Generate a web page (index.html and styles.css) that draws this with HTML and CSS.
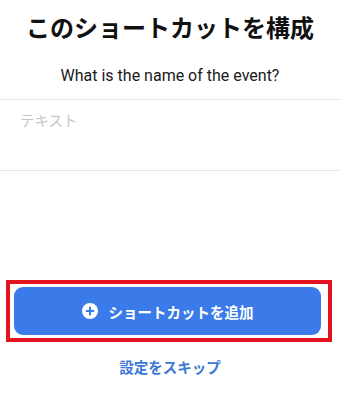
FILE: index.html
```html
<!DOCTYPE html>
<html lang="ja">
<head>
<meta charset="utf-8">
<link rel="stylesheet" href="styles.css">
</head>
<body>
<div class="page">
  <h1 class="title">このショートカットを構成</h1>
  <p class="question">What is the name of the event?</p>
  <div class="field"><span class="placeholder">テキスト</span></div>
  <div class="highlight">
    <button class="add-btn">
      <svg class="plus" viewBox="0 0 16 16" width="16" height="16" aria-hidden="true">
        <circle cx="8" cy="8" r="8" fill="#ffffff"/>
        <path d="M8 4.6v6.8M4.6 8h6.8" stroke="#3a7be9" stroke-width="2" stroke-linecap="round"/>
      </svg>
      <span>ショートカットを追加</span>
    </button>
  </div>
  <a class="skip">設定をスキップ</a>
</div>
</body>
</html>
```
FILE: styles.css
```css
html, body {
  margin: 0;
  padding: 0;
  background: #ffffff;
}
.page {
  width: 340px;
  height: 405px;
  display: flex;
  flex-direction: column;
  font-family: Roboto, "Noto Sans CJK JP", sans-serif;
  overflow: hidden;
}
.title {
  margin: 0;
  padding-top: 11px;
  font-family: "Noto Sans CJK JP", sans-serif;
  font-size: 24px;
  line-height: 32px;
  font-weight: 700;
  color: #111111;
  text-align: center;
  letter-spacing: 0;
}
.question {
  margin: 23px 0 0;
  font-family: Roboto, sans-serif;
  font-size: 16px;
  line-height: 20px;
  color: #1a1a1a;
  text-align: center;
}
.field {
  margin-top: 13px;
  height: 72px;
  border-top: 1.5px solid #e6e6e6;
  border-bottom: 1px solid #e6e6e6;
  box-sizing: border-box;
  padding: 10px 0 0 20px;
}
.placeholder {
  font-family: "Noto Sans CJK JP", sans-serif;
  font-size: 14.5px;
  line-height: 20px;
  color: #c6c6c6;
  display: block;
}
.highlight {
  margin: 109px 0 0 6px;
  width: 326px;
  border: 4px solid #e3141f;
  box-sizing: border-box;
  padding: 3px 7px 3px 4px;
}
.add-btn {
  width: 100%;
  height: 48px;
  border: none;
  border-radius: 9px;
  background: #3a7be9;
  color: #ffffff;
  display: flex;
  align-items: center;
  justify-content: center;
  gap: 11px;
  font-family: "Noto Sans CJK JP", sans-serif;
  font-size: 14.5px;
  font-weight: 700;
  padding: 0;
}
.plus {
  display: block;
  flex: none;
}
.skip {
  margin-top: 15px;
  font-family: "Noto Sans CJK JP", sans-serif;
  font-size: 14.5px;
  line-height: 20px;
  font-weight: 700;
  color: #3d79d6;
  text-align: center;
}
```
